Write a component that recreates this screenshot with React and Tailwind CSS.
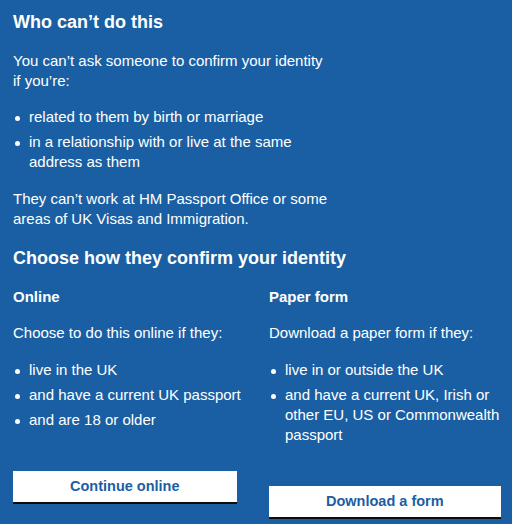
const Bullet = ({ children }) => (
  <li className="flex">
    <span className="w-[16px] shrink-0">
      <span className="block w-[5px] h-[5px] rounded-full bg-white ml-[2px] mt-[9px]"></span>
    </span>
    <span>{children}</span>
  </li>
);

const Option = ({ title, intro, items, button }) => (
  <div>
    <h3 className="text-[15px] leading-[20px] font-bold">{title}</h3>
    <p className="mt-[16px]">{intro}</p>
    <ul className="mt-[17px] space-y-[5px]">
      {items.map((item) => (
        <Bullet key={item}>{item}</Bullet>
      ))}
    </ul>
    <a
      href="#"
      className="inline-block mt-[41px] h-[31px] leading-[31px] px-[57px] bg-white text-[#1b5ea4] font-bold text-[14.5px] shadow-[0_2px_0_#0b0c0c]"
    >
      {button}
    </a>
  </div>
);

const App = () => {
  return (
    <div
      className="w-[512px] h-[524px] overflow-hidden bg-[#1a5fa3] text-white px-[13px] pt-[10px] text-[15px] leading-[20px]"
      style={{ fontFamily: '"Liberation Sans", Arial, sans-serif' }}
    >
      {/* Who can't do this */}
      <div className="w-[318px]">
        <h2 className="text-[18px] leading-[25px] font-bold">Who can’t do this</h2>
        <p className="mt-[16px]">You can’t ask someone to confirm your identity if you’re:</p>
        <ul className="mt-[16px] space-y-[5px]">
          <Bullet>related to them by birth or marriage</Bullet>
          <Bullet>in a relationship with or live at the same address as them</Bullet>
        </ul>
        <p className="mt-[17px]">
          They can’t work at HM Passport Office or some areas of UK Visas and Immigration.
        </p>
      </div>

      {/* Choose how */}
      <h2 className="mt-[17px] text-[18px] leading-[25px] font-bold">
        Choose how they confirm your identity
      </h2>
      <div className="mt-[16px] grid grid-cols-[230px_234px] gap-x-[26px] items-start">
        <Option
          title="Online"
          intro="Choose to do this online if they:"
          items={['live in the UK', 'and have a current UK passport', 'and are 18 or older']}
          button="Continue online"
        />
        <Option
          title="Paper form"
          intro="Download a paper form if they:"
          items={[
            'live in or outside the UK',
            'and have a current UK, Irish or other EU, US or Commonwealth passport',
          ]}
          button="Download a form"
        />
      </div>
    </div>
  );
};

export default App;
